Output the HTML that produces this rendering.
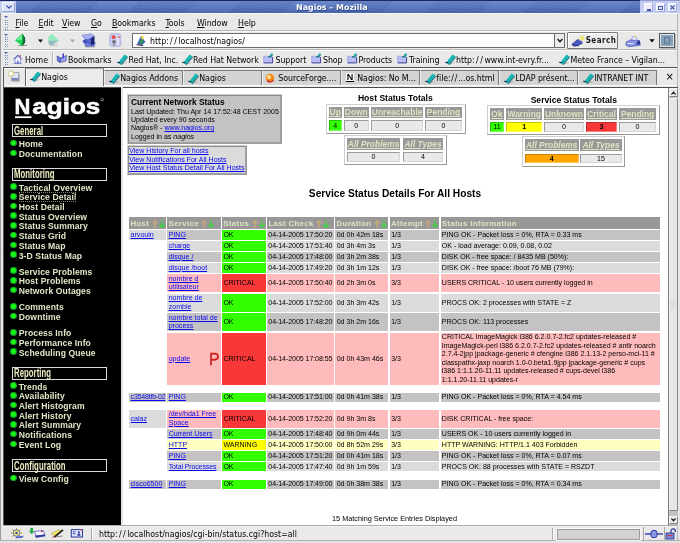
<!DOCTYPE html>
<html><head><meta charset="utf-8"><title>Nagios - Mozilla</title>
<style>
*{box-sizing:border-box;margin:0;padding:0}
html,body{width:680px;height:543px;overflow:hidden;background:#e9e9e9}
body{position:relative;font-family:"DejaVu Sans Condensed","DejaVu Sans","Liberation Sans",sans-serif;font-size:8.6px;color:#000}
.abs{position:absolute}
.ui{position:absolute;white-space:nowrap;font-size:8.75px;line-height:10px;color:#000;letter-spacing:-.06px}
u.k{text-decoration:underline;text-underline-offset:1px}
/* title bar */
#title{left:0;top:0;width:680px;height:13px;background:repeating-linear-gradient(135deg,rgba(255,255,255,.07) 0,rgba(255,255,255,.07) 1px,rgba(0,0,30,.07) 1px,rgba(0,0,30,.07) 2.1px),linear-gradient(180deg,#6787cd 0,#5b7bc3 35%,#4e6eb7 75%,#4464ad 100%);border-top:1px solid #1f2f6a}
#title .lite{left:640.2px;top:-1px;width:40px;height:13.5px;background:#c4ccef;border-top:.6px solid #8d99cf}
#title .t{left:296px;top:1.6px;color:#fff;font-weight:bold;font-size:7.95px;line-height:10px;letter-spacing:0;text-shadow:.6px .6px 0 #2a3c80;font-family:"DejaVu Sans","Liberation Sans",sans-serif}
.wb{position:absolute;top:2px;width:9.6px;height:8.8px;border:.8px solid;border-color:#fbfcff #a1acdf #a1acdf #fbfcff;background:#eceffb;border-radius:1px}
/* frame */
#frameL{left:0;top:13px;width:3px;height:530px;background:linear-gradient(90deg,#4a4a4a 0,#4a4a4a .45px,#ececec .55px,#e6e6e6 3px)}
#frameR{left:677px;top:13px;width:3px;height:530px;background:linear-gradient(90deg,#b5b5b5 0,#b5b5b5 .8px,#e9e9e9 .9px,#e4e4e4 3px)}
#frameB{left:0;top:539.6px;width:680px;height:3.4px;background:linear-gradient(180deg,#b0b0b0 0,#b0b0b0 .8px,#e6e6e6 .9px,#dedede 3.4px)}
.hl{position:absolute;left:3px;width:674px;height:1px}
.grip{position:absolute;left:4.6px;width:4px;background-image:linear-gradient(90deg,#6179bd 0,#6179bd 1px,transparent 1px,transparent 2px,#8a9bd0 2px,#8a9bd0 3px,transparent 3px);-webkit-mask-image:repeating-linear-gradient(180deg,#000 0,#000 1px,transparent 1px,transparent 2.2px);mask-image:repeating-linear-gradient(180deg,#000 0,#000 1px,transparent 1px,transparent 2.2px)}


/* toolbars */
.sepd{position:absolute;left:3px;width:674px;height:1px;background:#b9b9b9}
.sepl{position:absolute;left:3px;width:674px;height:1px;background:#fbfbfb}
#urlbox{left:132px;top:33px;width:422px;height:15px;background:#fff;border:1px solid #6d6d6d;border-right:0}
#urldd{left:554px;top:33px;width:11px;height:15px;background:#ececec;border:1px solid #6d6d6d}
#search{left:567px;top:32px;width:51px;height:17px;background:#ececec;border:1px solid #7a7a7a;border-radius:1px;box-shadow:inset 1px 1px 0 #fff}
#throb{left:659px;top:33px;width:16px;height:15px;background:#86a0b8;border:1px solid #555;box-shadow:inset 0 0 0 1px #dfe8ef, 1px 1px 0 #bbb}
.tab{position:absolute;top:69.8px;height:14.8px;width:79px;background:#d4d4d4;border:.9px solid #7c7c7c;border-bottom:0;border-left-color:#efefef}
.tab.act{top:68.3px;height:18.2px;background:#ebebeb;border-color:#a9a9a9 #6f6f6f #6f6f6f #5e5e5e;box-shadow:inset 1px 0 0 #fbfbfb;z-index:2}
.tab>span{position:absolute;top:2.2px;white-space:nowrap;font-size:8.75px;line-height:10px;letter-spacing:-.06px}
.tab.act>span{top:2.4px}
#status{left:3px;top:525px;width:674px;height:15px;background:#e9e9e9;border-top:1px solid #a9a9a9}

#side .it{position:absolute;left:14.7px;white-space:nowrap;font-weight:bold;font-size:8.6px;line-height:10px;color:#dee7c6;letter-spacing:.1px}
#side .dot{position:absolute;left:6.3px;width:6.6px;height:6.6px;border-radius:50%;background:radial-gradient(circle at 50% 48%,#2bff2b 0,#10f010 42%,#0c9a1a 62%,#56608c 78%,#3a4266 100%)}
#side .hd{position:absolute;left:8px;width:95px;height:13px;border:1px solid #dcdcdc}
#side .hd span{position:absolute;left:.7px;top:-.3px;font-size:12.4px;line-height:12px;color:#efeec4;transform:scaleX(.625);transform-origin:0 50%;white-space:nowrap;font-weight:bold;letter-spacing:.1px}
#logo{position:absolute;left:10.6px;top:6px;font-weight:bold;font-size:22px;line-height:26px;letter-spacing:1.95px;color:#fff;white-space:nowrap}

/*MAINCSS*/
#main div,#main a,#main span{position:absolute;white-space:nowrap}
#main a{color:#0a0aee;text-decoration:underline;text-decoration-thickness:.7px;text-underline-offset:.7px;position:static}
#main .t8{font-size:7.05px;line-height:8.45px}
#main .b10{font-size:8.5px;line-height:10px;font-weight:bold}
#main .box{border:1px solid;border-color:#cfcfcf #9a9a9a #9a9a9a #cfcfcf}
#main .in{border:1px solid;border-color:#8a8a8a #a2a2a2 #a2a2a2 #8a8a8a}
#main .th{background:#999797;color:#dce5c1;font-size:8.45px;line-height:10px;font-weight:bold;text-align:center;overflow:hidden}
#main .th span{text-decoration:underline;text-underline-offset:.6px;text-decoration-thickness:.8px}
#main .th.i{font-style:italic}
#main .tv{background:#e9e9e9;font-size:7.05px;line-height:8.4px;text-align:center;border:1px solid;border-color:#9c9c9c #d6d6d6 #d6d6d6 #9c9c9c}
#main .c{display:flex;align-items:center;font-size:7.05px;line-height:8.45px;padding-left:1.3px;overflow:hidden}
#main .c>span{position:static;display:block}
#main .h{background:#999797;color:#dce5c1;font-size:7.9px;letter-spacing:.31px;line-height:10px;font-weight:bold;padding-left:1.2px;padding-top:1.2px;display:flex;align-items:center;overflow:hidden}
#main .ar{position:static;display:inline-block;margin-left:2.4px}
/*ENDMAINCSS*/
/* page */
#side{left:4px;top:87px;width:117px;height:438px;background:#000;color:#fff;font-family:"Liberation Sans",sans-serif}
#main{left:123px;top:88px;width:545px;height:437px;background:#fff;font-family:"Liberation Sans",sans-serif;font-size:7px}
</style></head><body><div id="wrap" style="position:absolute;left:0;top:0;width:680px;height:543px;will-change:transform;filter:blur(.32px)">
<div id="title" class="abs"><div class="abs lite"></div><div class="abs" style="left:0;top:0;width:16px;height:13px;background:#c3cbee"></div><div class="abs t">Nagios – Mozilla</div>
<div class="wb" style="left:2px;width:13px;height:10px;top:1px;background:#dfe3f7;border-color:#f4f6fd #9aa6d8 #9aa6d8 #f4f6fd"><svg class="abs" style="left:2.5px;top:2px" width="6" height="4" viewBox="0 0 6 4"><path d="M.5 .6L3 3.100 5.500 .6" fill="none" stroke="#3a4a9a" stroke-width="1.200"/></svg></div>
<div class="wb" style="left:643.600px"><div class="abs" style="left:2px;top:5px;width:4px;height:1.500px;background:#4656a4"></div></div><div class="wb" style="left:655.800px"><div class="abs" style="left:1.500px;top:1.500px;width:5px;height:4.500px;border:1px solid #4656a4;border-top-width:1.600px"></div></div><div class="wb" style="left:667.800px"><svg class="abs" style="left:1.500px;top:1.200px" width="5" height="5" viewBox="0 0 5 5"><path d="M.5 .5l4 4M4.500 .5l-4 4" stroke="#4656a4" stroke-width="1.100"/></svg></div>
<div class="abs" style="left:0;top:12px;width:680px;height:1px;background:#3c4f92;opacity:.8"></div></div>
<div id="frameL" class="abs"></div><div id="frameR" class="abs"></div><div id="frameB" class="abs"></div>
<div class="sepd" style="top:30px"></div><div class="sepl" style="top:31px"></div>
<div class="sepd" style="top:49px"></div><div class="sepl" style="top:50px"></div>
<div class="sepd" style="top:66.600px;background:#505050;left:3.300px"></div><div class="sepl" style="top:67.600px;height:.8px"></div>
<div class="abs" style="left:4px;top:15.500px;border:2.600px solid transparent;border-top:2.800px solid #4a67b0;border-bottom:0"></div><div class="abs" style="left:4px;top:33.500px;border:2.600px solid transparent;border-top:2.800px solid #4a67b0;border-bottom:0"></div><div class="abs" style="left:4px;top:52px;border:2.600px solid transparent;border-top:2.800px solid #4a67b0;border-bottom:0"></div><div class="grip" style="top:19.500px;height:10px"></div><div class="grip" style="top:37px;height:11px"></div><div class="grip" style="top:55px;height:10px"></div>
<div class="ui" style="left:15.5px;top:18px"><u class="k">F</u>ile</div>
<div class="ui" style="left:38.5px;top:18px"><u class="k">E</u>dit</div>
<div class="ui" style="left:62px;top:18px"><u class="k">V</u>iew</div>
<div class="ui" style="left:91px;top:18px"><u class="k">G</u>o</div>
<div class="ui" style="left:112px;top:18px"><u class="k">B</u>ookmarks</div>
<div class="ui" style="left:165.5px;top:18px"><u class="k">T</u>ools</div>
<div class="ui" style="left:197px;top:18px"><u class="k">W</u>indow</div>
<div class="ui" style="left:238px;top:18px"><u class="k">H</u>elp</div>
<svg class="abs" style="left:13px;top:33px" width="112" height="16" viewBox="0 0 112 16">
<path d="M5 12.800l9-.6" stroke="#555" stroke-width="1.100" opacity=".55"/>
<path d="M1.900 7.300L9.400 .5l2.100 3.500.3 5L9 13z" fill="#1fd658"/>
<path d="M9.400 .5l2.100 3.500.3 5L9 13l.6-6z" fill="#0d7a34"/><path d="M11.500 4l.3 5L9.600 12.400" fill="none" stroke="#0a2a14" stroke-width=".7"/>
<path d="M3 7.100L9 1.800 9.200 6.800z" fill="#7df2a4" opacity=".85"/>
<path d="M25 6.5h5l-2.5 3z" fill="#000"/>
<path d="M36 12.900l9-1" stroke="#999" stroke-width="1" opacity=".5"/>
<path d="M35.300 3.500L39 .8l7 6.700-7.500 5.500-3-2.500z" fill="#93ecbc"/>
<path d="M35.400 7.500l10.600 0-7.500 5.500-3-2.500z" fill="#9fc4c0" opacity=".9"/><path d="M36 9h6M36 10.700h4" stroke="#8aa0cc" stroke-width=".7"/>
<path d="M57 6.5h5l-2.5 3z" fill="#a5a5a5"/>
<ellipse cx="77" cy="13.400" rx="5.500" ry="1.100" fill="#666" opacity=".45"/>
<path d="M71 4l10-1v9l-8 1z" fill="#5563cc"/><path d="M70.500 9l7.500 2 4.500-1.500L81 13l-8 .5z" fill="#6f7de2" stroke="#3a44a8" stroke-width=".4"/>
<path d="M78 3.500l3.500-.5v8l-3.500 1.500z" fill="#1c2270"/>
<path d="M69 2.200l9-1.400 3.500 2.200-8.500 4.500z" fill="#a9b1f3" stroke="#5d68cc" stroke-width=".5"/>
<path d="M69 8l5.200-2.200-1 4.900z" fill="#3a48b8"/>
<rect x="96.500" y=".6" width="11.500" height="13" rx="2.500" fill="#c7cbef" stroke="#8d92d2" stroke-width=".7" stroke-dasharray="1 .8"/>
<rect x="103.800" y="2" width="2.200" height="10" fill="#e4e6fa" opacity=".8"/>
<circle cx="100.600" cy="4.200" r="1.900" fill="#ee4a4a"/><circle cx="101" cy="8.800" r="1.900" fill="#70727c"/><circle cx="105.600" cy="4" r="1" fill="#e66"/><circle cx="101" cy="12" r="1.100" fill="#8a8c98"/>
</svg>
<div id="urlbox" class="abs"></div><div id="urldd" class="abs"><svg class="abs" style="left:1.5px;top:4px" width="6" height="5" viewBox="0 0 6 5"><path d="M.6 1 L3 3.8 L5.4 1" fill="none" stroke="#000" stroke-width="1.3"/></svg></div>
<svg class="abs" style="left:136px;top:35px" width="11" height="11" viewBox="0 0 11 11"><path d="M1 9 L5 1 L9.5 7 L6 10Z" fill="#3b5fb5"/><path d="M5 1 L7 0.5 L8 4 L5.5 5Z" fill="#e9d24a"/><path d="M3 6 L6 4 L8 7 L5 9Z" fill="#2d9a55"/><path d="M.5 9.8 L7 10.5" stroke="#223" stroke-width="1"/></svg>
<div class="ui" style="left:150px;top:35.5px;font-size:8.75px;letter-spacing:0">http:<span style="letter-spacing:1.5px;margin-left:1.2px">//</span>localhost/nagios/</div>
<div id="search" class="abs"><svg class="abs" style="left:3px;top:2px" width="15" height="12" viewBox="0 0 15 12"><path d="M.8 9.400L6.500 4.600l3.300.8 1.700 2.800L7 10.600l-4 .6z" fill="#4a58c0" stroke="#1a2478" stroke-width=".6"/><path d="M8.200 4.800L9.600 .6l3 .6 1.200 3-2.600 1.600z" fill="#f3e86a" opacity=".9"/><path d="M8 5l3 .8 1 2" fill="none" stroke="#c8ccf4" stroke-width=".7"/><path d="M1.500 10l6.500.7" stroke="#1a2478" stroke-width=".7"/></svg><div class="ui" style="left:17.700px;top:3.200px;font-weight:bold;font-size:8px;letter-spacing:.48px;color:#1c1c1c;font-family:'DejaVu Sans Condensed','Liberation Sans',sans-serif">Search</div></div>
<svg class="abs" style="left:625px;top:34.500px" width="17" height="13" viewBox="0 0 17 13"><path d="M1 7.200L5.500 4.800l9 .8.800 4.600L4 11.800 1 10.200z" fill="#8590e6" stroke="#3a44a8" stroke-width=".6"/><path d="M11 9.800l4.200-.6L14.800 6 13 5.600z" fill="#2a3388"/><path d="M6.500 4.900L7.800 1.400l4 .8.200 3.100z" fill="#e4e7ff" stroke="#5a64c0" stroke-width=".45"/><path d="M2.500 8.400l6.500.5" stroke="#eef0ff" stroke-width=".9"/><circle cx="10.200" cy="1.400" r=".9" fill="#f0e05a"/></svg>
<svg class="abs" style="left:649px;top:39px" width="6" height="4" viewBox="0 0 6 4"><path d="M.3 .3h5.4L3 3.6z" fill="#000"/></svg>
<div id="throb" class="abs"><div class="abs" style="left:4px;top:3px;width:6px;height:7px;border:1px solid #5d7890"></div></div>
<svg class="abs" style="left:12.500px;top:53.500px" width="10" height="10" viewBox="0 0 10 10"><path d="M2 5.200v4h5.600v-4L4.800 2.300z" fill="#f3f4ff" stroke="#6c77d2" stroke-width=".7"/><path d="M.6 5.400L4.800 1l4.200 4.400" fill="none" stroke="#4450b8" stroke-width="1"/><rect x="4" y="6.500" width="1.600" height="2.700" fill="#6c77d2"/><rect x="6.800" y=".8" width="1" height="2" fill="#c44"/><path d="M.5 9.400h8" stroke="#4450b8" stroke-width=".6"/></svg>
<div class="ui" style="left:25px;top:54.700px">Home</div>
<div class="abs" style="left:52px;top:52px;width:1px;height:13px;background:#b5b5b5"></div><div class="abs" style="left:53px;top:52px;width:1px;height:13px;background:#fcfcfc"></div>
<svg class="abs" style="left:56px;top:53px" width="12" height="11" viewBox="0 0 12 11"><path d="M1 3 L5 5 L4 9.5 L1.5 8Z" fill="#6c78d8" stroke="#2b3596" stroke-width=".6"/><path d="M5 5 L10.5 2.5 L10 8 L4 9.5Z" fill="#9aa4f0" stroke="#2b3596" stroke-width=".6"/><path d="M6.5 .5 L8 .5 L8 6 L7.2 5 L6.5 6Z" fill="#4a3ad0"/></svg>
<div class="ui" style="left:68px;top:54.700px">Bookmarks</div>
<svg class="abs" style="left:116.5px;top:54px" width="11" height="11" viewBox="0 0 11 11"><path d="M5 9.800L9.600 8.500" stroke="#8a8a8a" stroke-width=".7" opacity=".7"/><path d="M.9 9.100L7.500 .5l3.100 1.900L3.700 10.600z" fill="#15b6b4"/><path d="M3.700 10.600L10.600 2.400v1.300L4.500 10.900z" fill="#0a5d6a"/><path d="M.1 8.300l3.300.5" stroke="#1a2a4c" stroke-width="1.100"/></svg>
<div class="ui" style="left:128.5px;top:54.700px">Red Hat, Inc.</div>
<svg class="abs" style="left:181.5px;top:54px" width="11" height="11" viewBox="0 0 11 11"><path d="M5 9.800L9.600 8.500" stroke="#8a8a8a" stroke-width=".7" opacity=".7"/><path d="M.9 9.100L7.500 .5l3.100 1.900L3.700 10.600z" fill="#15b6b4"/><path d="M3.700 10.600L10.600 2.400v1.300L4.500 10.900z" fill="#0a5d6a"/><path d="M.1 8.300l3.300.5" stroke="#1a2a4c" stroke-width="1.100"/></svg>
<div class="ui" style="left:193px;top:54.700px">Red Hat Network</div>
<svg class="abs" style="left:263px;top:53.400px" width="11" height="11" viewBox="0 0 11 11"><path d="M.6 3.200h3.200l.8.9h5v5.800h-9z" fill="#b9bdf6"/><path d="M.6 9.900h9V4.100" fill="none" stroke="#2c3284" stroke-width=".9"/><path d="M.6 9.900V3.200h3.200l.8.9h5" fill="none" stroke="#8f95e0" stroke-width=".6"/><path d="M5.600 3.900L8.400 .2l1.500.9L7.300 4.600z" fill="#14aaa8"/><path d="M7.300 4.600L9.900 1.100v.9L7.900 4.800z" fill="#0a5d6a"/><path d="M5 3.600l1.700.3" stroke="#1a2a4c" stroke-width=".8"/></svg>
<div class="ui" style="left:275.5px;top:54.700px">Support</div>
<svg class="abs" style="left:311px;top:53.400px" width="11" height="11" viewBox="0 0 11 11"><path d="M.6 3.200h3.200l.8.9h5v5.800h-9z" fill="#b9bdf6"/><path d="M.6 9.900h9V4.100" fill="none" stroke="#2c3284" stroke-width=".9"/><path d="M.6 9.900V3.200h3.200l.8.9h5" fill="none" stroke="#8f95e0" stroke-width=".6"/><path d="M5.600 3.900L8.400 .2l1.500.9L7.300 4.600z" fill="#14aaa8"/><path d="M7.300 4.600L9.900 1.100v.9L7.900 4.800z" fill="#0a5d6a"/><path d="M5 3.600l1.700.3" stroke="#1a2a4c" stroke-width=".8"/></svg>
<div class="ui" style="left:323px;top:54.700px">Shop</div>
<svg class="abs" style="left:346.5px;top:53.400px" width="11" height="11" viewBox="0 0 11 11"><path d="M.6 3.200h3.200l.8.9h5v5.800h-9z" fill="#b9bdf6"/><path d="M.6 9.900h9V4.100" fill="none" stroke="#2c3284" stroke-width=".9"/><path d="M.6 9.900V3.200h3.200l.8.9h5" fill="none" stroke="#8f95e0" stroke-width=".6"/><path d="M5.600 3.900L8.400 .2l1.500.9L7.300 4.600z" fill="#14aaa8"/><path d="M7.300 4.600L9.900 1.100v.9L7.900 4.800z" fill="#0a5d6a"/><path d="M5 3.600l1.700.3" stroke="#1a2a4c" stroke-width=".8"/></svg>
<div class="ui" style="left:358.5px;top:54.700px">Products</div>
<svg class="abs" style="left:396.5px;top:53.400px" width="11" height="11" viewBox="0 0 11 11"><path d="M.6 3.200h3.200l.8.9h5v5.800h-9z" fill="#b9bdf6"/><path d="M.6 9.900h9V4.100" fill="none" stroke="#2c3284" stroke-width=".9"/><path d="M.6 9.900V3.200h3.200l.8.9h5" fill="none" stroke="#8f95e0" stroke-width=".6"/><path d="M5.600 3.900L8.400 .2l1.500.9L7.300 4.600z" fill="#14aaa8"/><path d="M7.300 4.600L9.900 1.100v.9L7.900 4.800z" fill="#0a5d6a"/><path d="M5 3.600l1.700.3" stroke="#1a2a4c" stroke-width=".8"/></svg>
<div class="ui" style="left:409px;top:54.700px">Training</div>
<svg class="abs" style="left:444.5px;top:54px" width="11" height="11" viewBox="0 0 11 11"><path d="M5 9.800L9.600 8.500" stroke="#8a8a8a" stroke-width=".7" opacity=".7"/><path d="M.9 9.100L7.500 .5l3.100 1.900L3.700 10.600z" fill="#15b6b4"/><path d="M3.700 10.600L10.600 2.400v1.300L4.500 10.900z" fill="#0a5d6a"/><path d="M.1 8.300l3.300.5" stroke="#1a2a4c" stroke-width="1.100"/></svg>
<div class="ui" style="left:456px;top:54.700px">http:<span style="letter-spacing:1.6px;margin-left:1.4px">//</span>www.int-evry.fr...</div>
<svg class="abs" style="left:558.5px;top:54px" width="11" height="11" viewBox="0 0 11 11"><path d="M5 9.800L9.600 8.500" stroke="#8a8a8a" stroke-width=".7" opacity=".7"/><path d="M.9 9.100L7.500 .5l3.100 1.900L3.700 10.600z" fill="#15b6b4"/><path d="M3.700 10.600L10.600 2.400v1.300L4.500 10.900z" fill="#0a5d6a"/><path d="M.1 8.300l3.300.5" stroke="#1a2a4c" stroke-width="1.100"/></svg>
<div class="ui" style="left:570.5px;top:54.700px">Meteo France – Vigilan...</div>
<div class="abs" style="left:4px;top:84.600px;width:673px;height:1px;background:#fafafa"></div>
<svg class="abs" style="left:7px;top:70px" width="14" height="13" viewBox="0 0 14 13"><rect x="4.500" y="2.500" width="7.300" height="8.300" fill="#e3e6f6" stroke="#8a8a8a" stroke-width=".7"/><rect x="5" y="8" width="6.500" height="2.500" fill="#7684c0"/><path d="M5.500 11.400h6.800V4" fill="none" stroke="#9a9a9a" stroke-width=".6"/><circle cx="4.200" cy="3.800" r="3.100" fill="#f1ea8a" opacity=".9"/><circle cx="3.900" cy="3.600" r="1.700" fill="#fff"/><circle cx="4.200" cy="3.800" r="3.100" fill="none" stroke="#a9b0d8" stroke-width=".5"/></svg>
<div class="tab act" style="left:25.3px"><svg class="abs" style="left:4px;top:2px" width="11" height="11" viewBox="0 0 11 11"><path d="M5 9.800L9.600 8.500" stroke="#8a8a8a" stroke-width=".7" opacity=".7"/><path d="M.9 9.100L7.500 .5l3.100 1.900L3.700 10.600z" fill="#15b6b4"/><path d="M3.700 10.600L10.600 2.400v1.300L4.500 10.900z" fill="#0a5d6a"/><path d="M.1 8.300l3.300.5" stroke="#1a2a4c" stroke-width="1.100"/></svg><span style="left:15px">Nagios</span></div>
<div class="tab" style="left:104.3px"><svg class="abs" style="left:4px;top:2px" width="11" height="11" viewBox="0 0 11 11"><path d="M5 9.800L9.600 8.500" stroke="#8a8a8a" stroke-width=".7" opacity=".7"/><path d="M.9 9.100L7.500 .5l3.100 1.900L3.700 10.600z" fill="#15b6b4"/><path d="M3.700 10.600L10.600 2.400v1.300L4.500 10.900z" fill="#0a5d6a"/><path d="M.1 8.300l3.300.5" stroke="#1a2a4c" stroke-width="1.100"/></svg><span style="left:15px">Nagios Addons</span></div>
<div class="tab" style="left:183.3px"><svg class="abs" style="left:4px;top:2px" width="11" height="11" viewBox="0 0 11 11"><path d="M5 9.800L9.600 8.500" stroke="#8a8a8a" stroke-width=".7" opacity=".7"/><path d="M.9 9.100L7.500 .5l3.100 1.900L3.700 10.600z" fill="#15b6b4"/><path d="M3.700 10.600L10.600 2.400v1.300L4.500 10.900z" fill="#0a5d6a"/><path d="M.1 8.300l3.300.5" stroke="#1a2a4c" stroke-width="1.100"/></svg><span style="left:15px">Nagios</span></div>
<div class="tab" style="left:262.3px"><svg class="abs" style="left:2px;top:2px" width="10" height="10" viewBox="0 0 10 10"><circle cx="5" cy="5" r="4.2" fill="#f08a1c"/><circle cx="4" cy="4" r="2" fill="#fbe08a"/><path d="M2 7.5 A4.2 4.2 0 0 0 8.5 7" fill="none" stroke="#c22" stroke-width="1.2"/></svg><span style="left:15px">SourceForge....</span></div>
<div class="tab" style="left:341.3px"><div class="abs" style="left:3.500px;top:2.200px;width:8.500px;height:9.500px;background:#fff;color:#000;font:bold 9px/8.500px 'Liberation Sans',sans-serif;text-align:center;border-bottom:1.200px solid #000">N</div><span style="left:15px">Nagios: No M...</span></div>
<div class="tab" style="left:420.3px"><svg class="abs" style="left:4px;top:2px" width="11" height="11" viewBox="0 0 11 11"><path d="M5 9.800L9.600 8.500" stroke="#8a8a8a" stroke-width=".7" opacity=".7"/><path d="M.9 9.100L7.500 .5l3.100 1.900L3.700 10.600z" fill="#15b6b4"/><path d="M3.700 10.600L10.600 2.400v1.300L4.500 10.900z" fill="#0a5d6a"/><path d="M.1 8.300l3.300.5" stroke="#1a2a4c" stroke-width="1.100"/></svg><span style="left:15px">file:<span style="letter-spacing:.8px;margin-left:.6px">//</span>...os.html</span></div>
<div class="tab" style="left:499.3px"><svg class="abs" style="left:4px;top:2px" width="11" height="11" viewBox="0 0 11 11"><path d="M5 9.800L9.600 8.500" stroke="#8a8a8a" stroke-width=".7" opacity=".7"/><path d="M.9 9.100L7.500 .5l3.100 1.900L3.700 10.600z" fill="#15b6b4"/><path d="M3.700 10.600L10.600 2.400v1.300L4.500 10.900z" fill="#0a5d6a"/><path d="M.1 8.300l3.300.5" stroke="#1a2a4c" stroke-width="1.100"/></svg><span style="left:15px">LDAP présent...</span></div>
<div class="tab" style="left:578.3px"><svg class="abs" style="left:4px;top:2px" width="11" height="11" viewBox="0 0 11 11"><path d="M5 9.800L9.600 8.500" stroke="#8a8a8a" stroke-width=".7" opacity=".7"/><path d="M.9 9.100L7.500 .5l3.100 1.900L3.700 10.600z" fill="#15b6b4"/><path d="M3.700 10.600L10.600 2.400v1.300L4.500 10.900z" fill="#0a5d6a"/><path d="M.1 8.300l3.300.5" stroke="#1a2a4c" stroke-width="1.100"/></svg><span style="left:15px">INTRANET INT</span></div>
<div class="ui" style="left:665.5px;top:71px;font-size:10px;line-height:12px;font-family:'DejaVu Sans',sans-serif">×</div>
<div id="status" class="abs"><div class="abs" style="left:0;top:0;width:674px;height:1px;background:#f4f4f4"></div>
<svg class="abs" style="left:6px;top:1.300px" width="78" height="12" viewBox="0 0 78 12">
<g><path d="M1.500 6h12M7.500 .8v10.400M3.200 2.300l8.600 7.400M11.800 2.300l-8.600 7.400" stroke="#b5a92a" stroke-width=".9"/><circle cx="7.500" cy="6" r="3.300" fill="#efe77a" stroke="#3b47a8" stroke-width=".7"/><circle cx="7.500" cy="6" r="1.200" fill="#3b47a8"/><path d="M7 9.600l8-.9-2 2.300-6.500.3z" fill="#5868d0"/></g>
<g><path d="M25.500 4.600l8.500-1.200 2 4.200-8.500 2.600z" fill="#f4f5ff" stroke="#4450b8" stroke-width=".7"/><path d="M26 8.600l10-1.200.4 1.800-9.400 1.600z" fill="#2c389c"/><rect x="32" y="3.600" width="1.800" height="1.500" fill="#d33"/><path d="M21.600 1h2.200v3.300h1.400L22.700 7 20.200 4.300h1.400z" fill="#22b04a" stroke="#0f7a2c" stroke-width=".3"/></g>
<g transform="translate(-2.200 0)"><path d="M44.500 6.500l7-3.800 3 1.800-6.800 4.500z" fill="#f1e46a" stroke="#8a7a1a" stroke-width=".4"/><path d="M47 9.500L55.500 2.200l1.300 1.200L48.500 10.600z" fill="#222"/><path d="M45 10.200l2-.9 1.300 1.400z" fill="#c33"/><path d="M50 9.800l6-.8" stroke="#666" stroke-width=".7"/></g>
<g transform="translate(-3 0)"><rect x="65.300" y="2.600" width="11.200" height="7.400" fill="#dfe4fb" stroke="#2b3596" stroke-width="1"/><rect x="66.800" y="4.300" width="2.600" height=".9" fill="#2b3596"/><rect x="66.800" y="6.200" width="2.600" height=".9" fill="#2b3596"/><path d="M71.300 8.800c0-2 .8-2.400 1.600-2.400s1.600.4 1.600 2.400z" fill="#2b3596"/><circle cx="72.900" cy="5.300" r="1" fill="#2b3596"/><rect x="74.300" y="2" width="1.600" height="1.400" fill="#d44"/></g>
</svg>
<div class="abs" style="left:88px;top:2px;width:1px;height:12px;background:#a9a9a9"></div><div class="abs" style="left:89px;top:2px;width:1px;height:12px;background:#fcfcfc"></div>
<div class="ui" style="left:96px;top:3px;font-size:8.7px;letter-spacing:0">http:<span style="letter-spacing:1.5px;margin-left:1.2px">//</span>localhost/nagios/cgi-bin/status.cgi?host=all</div>
<div class="abs" style="left:549px;top:2px;width:1px;height:12px;background:#a9a9a9"></div><div class="abs" style="left:550px;top:2px;width:1px;height:12px;background:#fcfcfc"></div>
<div class="abs" style="left:554px;top:2.5px;width:83px;height:11px;background:#d2d2d2;border:1px solid #9c9c9c;box-shadow:0 0 0 1px #f6f6f6"></div>
<div class="abs" style="left:639.5px;top:1px;width:1px;height:14px;background:#a9a9a9"></div>
<svg class="abs" style="left:642px;top:3px" width="18" height="10" viewBox="0 0 18 10"><path d="M0 5h18" stroke="#2b3bb0" stroke-width="1.4"/><rect x="6" y="1.500" width="6" height="7" rx="2" fill="#8a96e8" stroke="#1f2a90" stroke-width=".9"/></svg>
<div class="abs" style="left:660.5px;top:1px;width:1px;height:14px;background:#a9a9a9"></div>
<svg class="abs" style="left:662px;top:2px" width="12" height="12" viewBox="0 0 12 12"><path d="M6 5 V3 a2.200 2.200 0 0 1 4.400 0 V4" fill="none" stroke="#2b3596" stroke-width="1.200"/><rect x="1" y="5" width="8" height="6" fill="#7f8be0" stroke="#1f2a80" stroke-width=".8"/><rect x="2.500" y="7" width="5" height="1.200" fill="#c33"/></svg>
</div>
<div id="side" class="abs">
<svg class="abs" style="left:0;top:0" width="117" height="36" viewBox="0 0 117 36"><g font-family="Liberation Sans, sans-serif" font-weight="bold" font-size="22" fill="#fff" stroke="#fff" stroke-width=".55"><text x="10.6" y="26.700">N</text><text x="28.300" y="26.700" textLength="68" lengthAdjust="spacingAndGlyphs">agios</text></g><rect x="11" y="29.300" width="16.500" height="1.800" fill="#fff"/><circle cx="98.300" cy="12.600" r="1.300" fill="none" stroke="#ccc" stroke-width=".5"/><text x="97.300" y="13.600" font-size="2.500" fill="#ccc" font-family="Liberation Sans, sans-serif">R</text></svg>
<div class="hd" style="top:37.1px"><span>General</span></div>
<div class="dot" style="top:52.9px"></div><div class="it" style="top:52.2px">Home</div>
<div class="dot" style="top:62.6px"></div><div class="it" style="top:61.9px">Documentation</div>
<div class="hd" style="top:80.5px"><span>Monitoring</span></div>
<div class="dot" style="top:96.2px"></div><div class="it" style="top:95.5px">Tactical Overview</div>
<div class="dot" style="top:106.0px"></div><div class="it" style="top:105.3px;outline:.8px dotted #80806c;outline-offset:-1.1px">Service Detail</div>
<div class="dot" style="top:115.7px"></div><div class="it" style="top:115.0px">Host Detail</div>
<div class="dot" style="top:125.4px"></div><div class="it" style="top:124.7px">Status Overview</div>
<div class="dot" style="top:135.1px"></div><div class="it" style="top:134.4px">Status Summary</div>
<div class="dot" style="top:144.9px"></div><div class="it" style="top:144.2px">Status Grid</div>
<div class="dot" style="top:154.6px"></div><div class="it" style="top:153.9px">Status Map</div>
<div class="dot" style="top:164.3px"></div><div class="it" style="top:163.6px">3-D Status Map</div>
<div class="dot" style="top:180.3px"></div><div class="it" style="top:179.6px">Service Problems</div>
<div class="dot" style="top:190.1px"></div><div class="it" style="top:189.4px">Host Problems</div>
<div class="dot" style="top:199.9px"></div><div class="it" style="top:199.2px">Network Outages</div>
<div class="dot" style="top:216.1px"></div><div class="it" style="top:215.4px">Comments</div>
<div class="dot" style="top:225.8px"></div><div class="it" style="top:225.1px">Downtime</div>
<div class="dot" style="top:242.0px"></div><div class="it" style="top:241.3px">Process Info</div>
<div class="dot" style="top:251.8px"></div><div class="it" style="top:251.1px">Performance Info</div>
<div class="dot" style="top:261.4px"></div><div class="it" style="top:260.7px">Scheduling Queue</div>
<div class="hd" style="top:279.7px"><span>Reporting</span></div>
<div class="dot" style="top:295.3px"></div><div class="it" style="top:294.6px">Trends</div>
<div class="dot" style="top:305.0px"></div><div class="it" style="top:304.3px">Availability</div>
<div class="dot" style="top:314.6px"></div><div class="it" style="top:313.9px">Alert Histogram</div>
<div class="dot" style="top:324.3px"></div><div class="it" style="top:323.6px">Alert History</div>
<div class="dot" style="top:334.0px"></div><div class="it" style="top:333.3px">Alert Summary</div>
<div class="dot" style="top:343.8px"></div><div class="it" style="top:343.1px">Notifications</div>
<div class="dot" style="top:353.5px"></div><div class="it" style="top:352.8px">Event Log</div>
<div class="hd" style="top:371.9px"><span>Configuration</span></div>
<div class="dot" style="top:387.5px"></div><div class="it" style="top:386.8px">View Config</div>
</div>
<!--MAIN-->
<div id="main" class="abs">
<div class="box" style="left:4.30px;top:5.60px;width:155.20px;height:50.20px"><div class="in" style="left:0;top:0;right:0;bottom:0;background:#c4c2c2"></div></div>
<div class="b10" style="left:8px;top:9.35px;font-size:8.38px">Current Network Status</div>
<div class="t8" style="left:8.00px;top:20.30px;">Last Updated: Thu Apr 14 17:52:48 CEST 2005</div>
<div class="t8" style="left:8.00px;top:28.30px;">Updated every 90 seconds</div>
<div class="t8" style="left:8.00px;top:36.30px;">Nagios® - <a>www.nagios.org</a></div>
<div class="t8" style="left:8.00px;top:45.30px;">Logged in as <i>nagios</i></div>
<div class="box" style="left:4.30px;top:57.20px;width:120.00px;height:29.40px"><div class="in" style="left:0;top:0;right:0;bottom:0;background:#dbdbdb"></div></div>
<div class="t8" style="left:6.20px;top:59.30px;"><a>View History For all hosts</a></div>
<div class="t8" style="left:6.20px;top:68.30px;"><a>View Notifications For All Hosts</a></div>
<div class="t8" style="left:6.20px;top:76.30px;"><a>View Host Status Detail For All Hosts</a></div>
<div class="b10" style="left:172.30px;width:200px;text-align:center;top:5.05px;font-size:8.6px">Host Status Totals</div>
<div class="box" style="left:202.50px;top:15.70px;width:140.10px;height:30.40px"></div>
<div class="th" style="left:205.80px;top:18.50px;width:12.80px;height:11.70px"><span style="left:50%;top:50%;transform:translate(-50%,-50%)">Up</span></div>
<div class="tv" style="left:205.80px;top:32.40px;width:12.80px;height:10.60px;background:#33ff00;border-color:rgba(0,0,0,.22) rgba(255,255,255,.35) rgba(255,255,255,.35) rgba(0,0,0,.22);"><span style="left:50%;top:50%;transform:translate(-50%,-50%)">4</span></div>
<div class="th" style="left:220.60px;top:18.50px;width:25.40px;height:11.70px"><span style="left:50%;top:50%;transform:translate(-50%,-50%)">Down</span></div>
<div class="tv" style="left:220.60px;top:32.40px;width:25.40px;height:10.60px;"><span style="left:50%;top:50%;transform:translate(-50%,-50%)">0</span></div>
<div class="th" style="left:248.20px;top:18.50px;width:52.00px;height:11.70px"><span style="left:50%;top:50%;transform:translate(-50%,-50%)">Unreachable</span></div>
<div class="tv" style="left:248.20px;top:32.40px;width:52.00px;height:10.60px;"><span style="left:50%;top:50%;transform:translate(-50%,-50%)">0</span></div>
<div class="th" style="left:302.40px;top:18.50px;width:36.20px;height:11.70px"><span style="left:50%;top:50%;transform:translate(-50%,-50%)">Pending</span></div>
<div class="tv" style="left:302.40px;top:32.40px;width:36.20px;height:10.60px;"><span style="left:50%;top:50%;transform:translate(-50%,-50%)">0</span></div>
<div class="box" style="left:220.60px;top:47.20px;width:103.70px;height:29.80px"></div>
<div class="th i" style="left:223.70px;top:50.10px;width:53.80px;height:11.50px"><span style="left:50%;top:50%;transform:translate(-50%,-50%)">All Problems</span></div>
<div class="tv" style="left:223.70px;top:63.80px;width:53.80px;height:10.10px;"><span style="left:50%;top:50%;transform:translate(-50%,-50%)">0</span></div>
<div class="th i" style="left:279.70px;top:50.10px;width:40.80px;height:11.50px"><span style="left:50%;top:50%;transform:translate(-50%,-50%)">All Types</span></div>
<div class="tv" style="left:279.70px;top:63.80px;width:40.80px;height:10.10px;"><span style="left:50%;top:50%;transform:translate(-50%,-50%)">4</span></div>
<div class="b10" style="left:350.80px;width:200px;text-align:center;top:7.35px;font-size:8.6px">Service Status Totals</div>
<div class="box" style="left:363.90px;top:17.20px;width:172.80px;height:30.00px"></div>
<div class="th" style="left:366.70px;top:20.00px;width:14.60px;height:11.90px"><span style="left:50%;top:50%;transform:translate(-50%,-50%)">Ok</span></div>
<div class="tv" style="left:366.70px;top:34.30px;width:14.60px;height:10.00px;background:#33ff00;border-color:rgba(0,0,0,.22) rgba(255,255,255,.35) rgba(255,255,255,.35) rgba(0,0,0,.22);"><span style="left:50%;top:50%;transform:translate(-50%,-50%)">11</span></div>
<div class="th" style="left:383.30px;top:20.00px;width:35.90px;height:11.90px"><span style="left:50%;top:50%;transform:translate(-50%,-50%)">Warning</span></div>
<div class="tv" style="left:383.30px;top:34.30px;width:35.90px;height:10.00px;background:#ffff00;border-color:rgba(0,0,0,.22) rgba(255,255,255,.35) rgba(255,255,255,.35) rgba(0,0,0,.22);font-weight:bold;"><span style="left:50%;top:50%;transform:translate(-50%,-50%)">1</span></div>
<div class="th" style="left:421.10px;top:20.00px;width:39.60px;height:11.90px"><span style="left:50%;top:50%;transform:translate(-50%,-50%)">Unknown</span></div>
<div class="tv" style="left:421.10px;top:34.30px;width:39.60px;height:10.00px;"><span style="left:50%;top:50%;transform:translate(-50%,-50%)">0</span></div>
<div class="th" style="left:462.60px;top:20.00px;width:31.80px;height:11.90px"><span style="left:50%;top:50%;transform:translate(-50%,-50%)">Critical</span></div>
<div class="tv" style="left:462.60px;top:34.30px;width:31.80px;height:10.00px;background:#f83838;border-color:rgba(0,0,0,.22) rgba(255,255,255,.35) rgba(255,255,255,.35) rgba(0,0,0,.22);font-weight:bold;"><span style="left:50%;top:50%;transform:translate(-50%,-50%)">3</span></div>
<div class="th" style="left:496.00px;top:20.00px;width:37.10px;height:11.90px"><span style="left:50%;top:50%;transform:translate(-50%,-50%)">Pending</span></div>
<div class="tv" style="left:496.00px;top:34.30px;width:37.10px;height:10.00px;"><span style="left:50%;top:50%;transform:translate(-50%,-50%)">0</span></div>
<div class="box" style="left:398.50px;top:48.40px;width:103.10px;height:30.50px"></div>
<div class="th i" style="left:401.80px;top:51.20px;width:53.90px;height:11.60px"><span style="left:50%;top:50%;transform:translate(-50%,-50%)">All Problems</span></div>
<div class="tv" style="left:401.80px;top:65.60px;width:53.90px;height:9.90px;background:#ffa500;border-color:rgba(0,0,0,.22) rgba(255,255,255,.35) rgba(255,255,255,.35) rgba(0,0,0,.22);font-weight:bold;"><span style="left:50%;top:50%;transform:translate(-50%,-50%)">4</span></div>
<div class="th i" style="left:457.40px;top:51.20px;width:41.20px;height:11.60px"><span style="left:50%;top:50%;transform:translate(-50%,-50%)">All Types</span></div>
<div class="tv" style="left:457.40px;top:65.60px;width:41.20px;height:9.90px;"><span style="left:50%;top:50%;transform:translate(-50%,-50%)">15</span></div>
<div style="left:122px;width:300px;text-align:center;top:99.5px;font-size:10.2px;line-height:12px;font-weight:bold">Service Status Details For All Hosts</div>
<div class="h" style="left:6.30px;top:129.20px;width:36.70px;height:11.50px"><span style="position:static">Host</span><svg class="ar" width="13" height="8" viewBox="0 0 13 8"><path d="M3 7.8V.9M.5 3.600L3 .7l2.500 2.900" fill="none" stroke="#f2bb55" stroke-width=".75"/><path d="M10 .3V7.200M7.400 4.500L10 7.400l2.600-2.900" fill="none" stroke="#35dc35" stroke-width="1.150"/></svg></div>
<div class="h" style="left:44.40px;top:129.20px;width:53.30px;height:11.50px"><span style="position:static">Service</span><svg class="ar" width="13" height="8" viewBox="0 0 13 8"><path d="M3 7.8V.9M.5 3.600L3 .7l2.500 2.900" fill="none" stroke="#f2bb55" stroke-width=".75"/><path d="M10 .3V7.200M7.400 4.500L10 7.400l2.600-2.900" fill="none" stroke="#35dc35" stroke-width="1.150"/></svg></div>
<div class="h" style="left:99.10px;top:129.20px;width:43.80px;height:11.50px"><span style="position:static">Status</span><svg class="ar" width="13" height="8" viewBox="0 0 13 8"><path d="M3 7.8V.9M.5 3.600L3 .7l2.500 2.900" fill="none" stroke="#f2bb55" stroke-width=".75"/><path d="M10 .3V7.200M7.400 4.500L10 7.400l2.600-2.900" fill="none" stroke="#35dc35" stroke-width="1.150"/></svg></div>
<div class="h" style="left:144.30px;top:129.20px;width:66.70px;height:11.50px"><span style="position:static">Last Check</span><svg class="ar" width="13" height="8" viewBox="0 0 13 8"><path d="M3 7.8V.9M.5 3.600L3 .7l2.500 2.900" fill="none" stroke="#f2bb55" stroke-width=".75"/><path d="M10 .3V7.200M7.400 4.500L10 7.400l2.600-2.900" fill="none" stroke="#35dc35" stroke-width="1.150"/></svg></div>
<div class="h" style="left:212.40px;top:129.20px;width:53.10px;height:11.50px"><span style="position:static">Duration</span><svg class="ar" width="13" height="8" viewBox="0 0 13 8"><path d="M3 7.8V.9M.5 3.600L3 .7l2.500 2.900" fill="none" stroke="#f2bb55" stroke-width=".75"/><path d="M10 .3V7.200M7.400 4.500L10 7.400l2.600-2.900" fill="none" stroke="#35dc35" stroke-width="1.150"/></svg></div>
<div class="h" style="left:266.90px;top:129.20px;width:49.30px;height:11.50px"><span style="position:static">Attempt</span><svg class="ar" width="13" height="8" viewBox="0 0 13 8"><path d="M3 7.8V.9M.5 3.600L3 .7l2.500 2.900" fill="none" stroke="#f2bb55" stroke-width=".75"/><path d="M10 .3V7.200M7.400 4.500L10 7.400l2.600-2.900" fill="none" stroke="#35dc35" stroke-width="1.150"/></svg></div>
<div class="h" style="left:317.50px;top:129.20px;width:219.90px;height:11.50px"><span style="position:static">Status Information</span></div>
<div class="c" style="left:6.30px;top:142.30px;width:36.70px;height:9.50px;background:#dbdbdb"><span><a>arvouin</a></span></div>
<div class="c" style="left:44.40px;top:142.30px;width:53.30px;height:9.50px;background:#c4c2c2"><span><a>PING</a></span></div>
<div class="c" style="left:99.10px;top:142.30px;width:43.80px;height:9.50px;background:#33ff00"><span>OK</span></div>
<div class="c" style="left:144.30px;top:142.30px;width:66.70px;height:9.50px;background:#c4c2c2;letter-spacing:-.07px;padding-left:1px"><span>04-14-2005 17:50:20</span></div>
<div class="c" style="left:212.40px;top:142.30px;width:53.10px;height:9.50px;background:#c4c2c2"><span>0d 0h 42m 18s</span></div>
<div class="c" style="left:266.90px;top:142.30px;width:49.30px;height:9.50px;background:#c4c2c2"><span>1/3</span></div>
<div class="c" style="left:317.50px;top:142.30px;width:219.90px;height:9.50px;background:#c4c2c2"><span>PING OK - Packet loss = 0%, RTA = 0.33 ms</span></div>
<div class="c" style="left:44.40px;top:153.40px;width:53.30px;height:9.40px;background:#dbdbdb"><span><a>charge</a></span></div>
<div class="c" style="left:99.10px;top:153.40px;width:43.80px;height:9.40px;background:#33ff00"><span>OK</span></div>
<div class="c" style="left:144.30px;top:153.40px;width:66.70px;height:9.40px;background:#dbdbdb;letter-spacing:-.07px;padding-left:1px"><span>04-14-2005 17:51:40</span></div>
<div class="c" style="left:212.40px;top:153.40px;width:53.10px;height:9.40px;background:#dbdbdb"><span>0d 3h 4m 3s</span></div>
<div class="c" style="left:266.90px;top:153.40px;width:49.30px;height:9.40px;background:#dbdbdb"><span>1/3</span></div>
<div class="c" style="left:317.50px;top:153.40px;width:219.90px;height:9.40px;background:#dbdbdb"><span>OK - load average: 0.09, 0.08, 0.02</span></div>
<div class="c" style="left:44.40px;top:164.30px;width:53.30px;height:9.40px;background:#c4c2c2"><span><a>disque /</a></span></div>
<div class="c" style="left:99.10px;top:164.30px;width:43.80px;height:9.40px;background:#33ff00"><span>OK</span></div>
<div class="c" style="left:144.30px;top:164.30px;width:66.70px;height:9.40px;background:#c4c2c2;letter-spacing:-.07px;padding-left:1px"><span>04-14-2005 17:48:00</span></div>
<div class="c" style="left:212.40px;top:164.30px;width:53.10px;height:9.40px;background:#c4c2c2"><span>0d 3h 2m 38s</span></div>
<div class="c" style="left:266.90px;top:164.30px;width:49.30px;height:9.40px;background:#c4c2c2"><span>1/3</span></div>
<div class="c" style="left:317.50px;top:164.30px;width:219.90px;height:9.40px;background:#c4c2c2"><span>DISK OK - free space: / 8435 MB (50%):</span></div>
<div class="c" style="left:44.40px;top:175.20px;width:53.30px;height:9.50px;background:#dbdbdb"><span><a>disque /boot</a></span></div>
<div class="c" style="left:99.10px;top:175.20px;width:43.80px;height:9.50px;background:#33ff00"><span>OK</span></div>
<div class="c" style="left:144.30px;top:175.20px;width:66.70px;height:9.50px;background:#dbdbdb;letter-spacing:-.07px;padding-left:1px"><span>04-14-2005 17:49:20</span></div>
<div class="c" style="left:212.40px;top:175.20px;width:53.10px;height:9.50px;background:#dbdbdb"><span>0d 3h 1m 12s</span></div>
<div class="c" style="left:266.90px;top:175.20px;width:49.30px;height:9.50px;background:#dbdbdb"><span>1/3</span></div>
<div class="c" style="left:317.50px;top:175.20px;width:219.90px;height:9.50px;background:#dbdbdb"><span>DISK OK - free space: /boot 76 MB (79%):</span></div>
<div class="c" style="left:44.40px;top:186.30px;width:53.30px;height:18.00px;background:#ffbbbb"><span><a>nombre d<br>utilisateur</a></span></div>
<div class="c" style="left:99.10px;top:186.30px;width:43.80px;height:18.00px;background:#f83838"><span>CRITICAL</span></div>
<div class="c" style="left:144.30px;top:186.30px;width:66.70px;height:18.00px;background:#ffbbbb;letter-spacing:-.07px;padding-left:1px"><span>04-14-2005 17:50:40</span></div>
<div class="c" style="left:212.40px;top:186.30px;width:53.10px;height:18.00px;background:#ffbbbb"><span>0d 2h 3m 0s</span></div>
<div class="c" style="left:266.90px;top:186.30px;width:49.30px;height:18.00px;background:#ffbbbb"><span>3/3</span></div>
<div class="c" style="left:317.50px;top:186.30px;width:219.90px;height:18.00px;background:#ffbbbb"><span>USERS CRITICAL - 10 users currently logged in</span></div>
<div class="c" style="left:44.40px;top:205.80px;width:53.30px;height:18.00px;background:#dbdbdb"><span><a>nombre de<br>zombie</a></span></div>
<div class="c" style="left:99.10px;top:205.80px;width:43.80px;height:18.00px;background:#33ff00"><span>OK</span></div>
<div class="c" style="left:144.30px;top:205.80px;width:66.70px;height:18.00px;background:#dbdbdb;letter-spacing:-.07px;padding-left:1px"><span>04-14-2005 17:52:00</span></div>
<div class="c" style="left:212.40px;top:205.80px;width:53.10px;height:18.00px;background:#dbdbdb"><span>0d 3h 3m 42s</span></div>
<div class="c" style="left:266.90px;top:205.80px;width:49.30px;height:18.00px;background:#dbdbdb"><span>1/3</span></div>
<div class="c" style="left:317.50px;top:205.80px;width:219.90px;height:18.00px;background:#dbdbdb"><span>PROCS OK: 2 processes with STATE = Z</span></div>
<div class="c" style="left:44.40px;top:225.30px;width:53.30px;height:18.00px;background:#c4c2c2"><span><a>nombre total de<br>process</a></span></div>
<div class="c" style="left:99.10px;top:225.30px;width:43.80px;height:18.00px;background:#33ff00"><span>OK</span></div>
<div class="c" style="left:144.30px;top:225.30px;width:66.70px;height:18.00px;background:#c4c2c2;letter-spacing:-.07px;padding-left:1px"><span>04-14-2005 17:48:20</span></div>
<div class="c" style="left:212.40px;top:225.30px;width:53.10px;height:18.00px;background:#c4c2c2"><span>0d 3h 2m 16s</span></div>
<div class="c" style="left:266.90px;top:225.30px;width:49.30px;height:18.00px;background:#c4c2c2"><span>1/3</span></div>
<div class="c" style="left:317.50px;top:225.30px;width:219.90px;height:18.00px;background:#c4c2c2"><span>PROCS OK: 113 processes</span></div>
<div class="c" style="left:44.40px;top:244.80px;width:53.30px;height:52.10px;background:#ffbbbb"><span><a>update</a></span><span style="position:absolute;right:1px;top:50%;margin-top:-7.9px;font-size:16px;line-height:17px;color:#cc2020;-webkit-text-stroke:.35px #cc2020">P</span></div>
<div class="c" style="left:99.10px;top:244.80px;width:43.80px;height:52.10px;background:#f83838"><span>CRITICAL</span></div>
<div class="c" style="left:144.30px;top:244.80px;width:66.70px;height:52.10px;background:#ffbbbb;letter-spacing:-.07px;padding-left:1px"><span>04-14-2005 17:08:55</span></div>
<div class="c" style="left:212.40px;top:244.80px;width:53.10px;height:52.10px;background:#ffbbbb"><span>0d 0h 43m 46s</span></div>
<div class="c" style="left:266.90px;top:244.80px;width:49.30px;height:52.10px;background:#ffbbbb"><span>3/3</span></div>
<div class="c" style="left:317.50px;top:244.80px;width:219.90px;height:52.10px;background:#ffbbbb"><span>CRITICAL ImageMagick i386 6.2.0.7-2.fc2 updates-released #<br>ImageMagick-perl i386 6.2.0.7-2.fc2 updates-released # antlr noarch<br>2.7.4-2jpp jpackage-generic # cfengine i386 2.1.13-2 perso-mci-11 #<br>classpathx-jaxp noarch 1.0-0.beta1.9jpp jpackage-generic # cups<br>i386 1:1.1.20-11.11 updates-released # cups-devel i386<br>1:1.1.20-11.11 updates-r</span></div>
<div class="c" style="left:6.30px;top:304.50px;width:36.70px;height:9.40px;background:#c4c2c2;letter-spacing:-.22px"><span><a>c3548tfb-02</a></span></div>
<div class="c" style="left:44.40px;top:304.50px;width:53.30px;height:9.40px;background:#c4c2c2"><span><a>PING</a></span></div>
<div class="c" style="left:99.10px;top:304.50px;width:43.80px;height:9.40px;background:#33ff00"><span>OK</span></div>
<div class="c" style="left:144.30px;top:304.50px;width:66.70px;height:9.40px;background:#c4c2c2;letter-spacing:-.07px;padding-left:1px"><span>04-14-2005 17:51:00</span></div>
<div class="c" style="left:212.40px;top:304.50px;width:53.10px;height:9.40px;background:#c4c2c2"><span>0d 0h 41m 38s</span></div>
<div class="c" style="left:266.90px;top:304.50px;width:49.30px;height:9.40px;background:#c4c2c2"><span>1/3</span></div>
<div class="c" style="left:317.50px;top:304.50px;width:219.90px;height:9.40px;background:#c4c2c2"><span>PING OK - Packet loss = 0%, RTA = 4.54 ms</span></div>
<div class="c" style="left:6.30px;top:322.00px;width:36.70px;height:17.90px;background:#dbdbdb"><span><a>calaz</a></span></div>
<div class="c" style="left:44.40px;top:322.00px;width:53.30px;height:17.90px;background:#ffbbbb"><span><a>/dev/hda1 Free<br>Space</a></span></div>
<div class="c" style="left:99.10px;top:322.00px;width:43.80px;height:17.90px;background:#f83838"><span>CRITICAL</span></div>
<div class="c" style="left:144.30px;top:322.00px;width:66.70px;height:17.90px;background:#ffbbbb;letter-spacing:-.07px;padding-left:1px"><span>04-14-2005 17:52:20</span></div>
<div class="c" style="left:212.40px;top:322.00px;width:53.10px;height:17.90px;background:#ffbbbb"><span>0d 9h 3m 8s</span></div>
<div class="c" style="left:266.90px;top:322.00px;width:49.30px;height:17.90px;background:#ffbbbb"><span>3/3</span></div>
<div class="c" style="left:317.50px;top:322.00px;width:219.90px;height:17.90px;background:#ffbbbb"><span>DISK CRITICAL - free space:</span></div>
<div class="c" style="left:44.40px;top:341.40px;width:53.30px;height:9.40px;background:#c4c2c2"><span><a>Current Users</a></span></div>
<div class="c" style="left:99.10px;top:341.40px;width:43.80px;height:9.40px;background:#33ff00"><span>OK</span></div>
<div class="c" style="left:144.30px;top:341.40px;width:66.70px;height:9.40px;background:#c4c2c2;letter-spacing:-.07px;padding-left:1px"><span>04-14-2005 17:48:40</span></div>
<div class="c" style="left:212.40px;top:341.40px;width:53.10px;height:9.40px;background:#c4c2c2"><span>0d 9h 0m 44s</span></div>
<div class="c" style="left:266.90px;top:341.40px;width:49.30px;height:9.40px;background:#c4c2c2"><span>1/3</span></div>
<div class="c" style="left:317.50px;top:341.40px;width:219.90px;height:9.40px;background:#c4c2c2"><span>USERS OK - 10 users currently logged in</span></div>
<div class="c" style="left:44.40px;top:352.30px;width:53.30px;height:9.40px;background:#feffc1"><span><a>HTTP</a></span></div>
<div class="c" style="left:99.10px;top:352.30px;width:43.80px;height:9.40px;background:#ffff00"><span>WARNING</span></div>
<div class="c" style="left:144.30px;top:352.30px;width:66.70px;height:9.40px;background:#feffc1;letter-spacing:-.07px;padding-left:1px"><span>04-14-2005 17:50:00</span></div>
<div class="c" style="left:212.40px;top:352.30px;width:53.10px;height:9.40px;background:#feffc1"><span>0d 8h 52m 29s</span></div>
<div class="c" style="left:266.90px;top:352.30px;width:49.30px;height:9.40px;background:#feffc1"><span>3/3</span></div>
<div class="c" style="left:317.50px;top:352.30px;width:219.90px;height:9.40px;background:#feffc1"><span>HTTP WARNING: HTTP/1.1 403 Forbidden</span></div>
<div class="c" style="left:44.40px;top:363.20px;width:53.30px;height:9.40px;background:#c4c2c2"><span><a>PING</a></span></div>
<div class="c" style="left:99.10px;top:363.20px;width:43.80px;height:9.40px;background:#33ff00"><span>OK</span></div>
<div class="c" style="left:144.30px;top:363.20px;width:66.70px;height:9.40px;background:#c4c2c2;letter-spacing:-.07px;padding-left:1px"><span>04-14-2005 17:51:20</span></div>
<div class="c" style="left:212.40px;top:363.20px;width:53.10px;height:9.40px;background:#c4c2c2"><span>0d 0h 41m 18s</span></div>
<div class="c" style="left:266.90px;top:363.20px;width:49.30px;height:9.40px;background:#c4c2c2"><span>1/3</span></div>
<div class="c" style="left:317.50px;top:363.20px;width:219.90px;height:9.40px;background:#c4c2c2"><span>PING OK - Packet loss = 0%, RTA = 0.07 ms</span></div>
<div class="c" style="left:44.40px;top:374.10px;width:53.30px;height:9.40px;background:#dbdbdb;letter-spacing:-.14px"><span><a>Total Processes</a></span></div>
<div class="c" style="left:99.10px;top:374.10px;width:43.80px;height:9.40px;background:#33ff00"><span>OK</span></div>
<div class="c" style="left:144.30px;top:374.10px;width:66.70px;height:9.40px;background:#dbdbdb;letter-spacing:-.07px;padding-left:1px"><span>04-14-2005 17:47:40</span></div>
<div class="c" style="left:212.40px;top:374.10px;width:53.10px;height:9.40px;background:#dbdbdb"><span>0d 9h 1m 59s</span></div>
<div class="c" style="left:266.90px;top:374.10px;width:49.30px;height:9.40px;background:#dbdbdb"><span>1/3</span></div>
<div class="c" style="left:317.50px;top:374.10px;width:219.90px;height:9.40px;background:#dbdbdb"><span>PROCS OK: 88 processes with STATE = RSZDT</span></div>
<div class="c" style="left:6.30px;top:392.00px;width:36.70px;height:9.40px;background:#c4c2c2"><span><a>cisco6500</a></span></div>
<div class="c" style="left:44.40px;top:392.00px;width:53.30px;height:9.40px;background:#c4c2c2"><span><a>PING</a></span></div>
<div class="c" style="left:99.10px;top:392.00px;width:43.80px;height:9.40px;background:#33ff00"><span>OK</span></div>
<div class="c" style="left:144.30px;top:392.00px;width:66.70px;height:9.40px;background:#c4c2c2;letter-spacing:-.07px;padding-left:1px"><span>04-14-2005 17:49:00</span></div>
<div class="c" style="left:212.40px;top:392.00px;width:53.10px;height:9.40px;background:#c4c2c2"><span>0d 0h 38m 38s</span></div>
<div class="c" style="left:266.90px;top:392.00px;width:49.30px;height:9.40px;background:#c4c2c2"><span>1/3</span></div>
<div class="c" style="left:317.50px;top:392.00px;width:219.90px;height:9.40px;background:#c4c2c2"><span>PING OK - Packet loss = 0%, RTA = 0.34 ms</span></div>
<div class="t8" style="left:121.5px;width:300px;text-align:center;top:426.60px;font-size:7.3px">15 Matching Service Entries Displayed</div>
</div>
<!--/MAIN-->
<div id="sbar" class="abs" style="left:668px;top:88px;width:10px;height:437px;background:#c2c2c2;border-left:1px solid #7a7a7a">
<div class="abs" style="left:0;top:.3px;width:9px;height:9.200px;background:#ebebeb;border:1px solid #858585;border-top-color:#f6f6f6;border-left-color:#f1f1f1"><svg class="abs" style="left:1.100px;top:2.200px" width="5" height="4" viewBox="0 0 5 4"><path d="M0 3.600L2.500 .5 5 3.600 2.500 2.500z" fill="#111" stroke="#111" stroke-width=".4" stroke-linejoin="round"/></svg></div>
<div class="abs" style="left:0;top:9.700px;width:9px;height:413.600px;background:#e6e6e6;border:1px solid #858585;border-top-color:#f6f6f6;border-left-color:#f1f1f1"><svg class="abs" style="left:.4px;top:200.800px" width="6" height="12" viewBox="0 0 6 12"><path d="M.4 4.400L5.400 .4M.4 7.600L5.400 3.600M.4 10.800L5.400 6.800" stroke="#b0b0b0" stroke-width=".8"/><path d="M.4 5.200L5.400 1.200M.4 8.400L5.400 4.400M.4 11.600L5.400 7.600" stroke="#f8f8f8" stroke-width=".6"/></svg></div>
<div class="abs" style="left:0;top:427.500px;width:9px;height:8.800px;background:#ebebeb;border:1px solid #858585;border-top-color:#f6f6f6;border-left-color:#f1f1f1"><svg class="abs" style="left:1.100px;top:1.800px" width="5" height="4" viewBox="0 0 5 4"><path d="M0 .4L2.500 3.500 5 .4 2.500 1.500z" fill="#111" stroke="#111" stroke-width=".4" stroke-linejoin="round"/></svg></div>
</div>
<div class="abs" style="left:3px;top:86.500px;width:674.500px;height:1px;background:#4e4e4e"></div>
<div class="abs" style="left:3.300px;top:67px;width:.8px;height:458px;background:#5a5a5a"></div>
<div class="abs" style="left:121px;top:87px;width:2px;height:438px;background:#e4e4e4"></div>
<div class="abs" style="left:2px;top:13px;width:676px;height:1px;background:#fafafa"></div>
<div class="abs" style="left:-4px;top:-4px;width:644.200px;height:5px;background:#1a2860"></div><div class="abs" style="left:640.200px;top:-4px;width:44px;height:4.600px;background:#8d99cf"></div><div class="abs" style="left:-4px;top:13px;width:4.400px;height:535px;background:#4a4a4a"></div><div class="abs" style="left:-4px;top:-4px;width:4px;height:17px;background:#c3cbee"></div>
</div></body></html>
